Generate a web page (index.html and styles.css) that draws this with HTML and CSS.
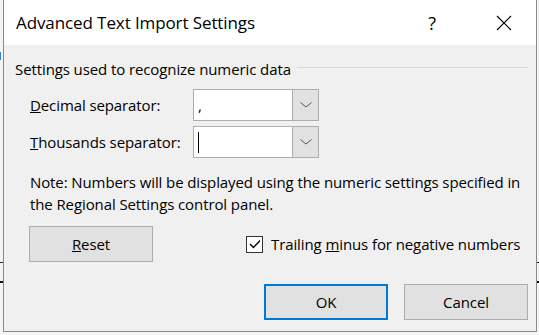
FILE: index.html
```html
<!DOCTYPE html>
<html lang="en">
<head>
  <meta charset="UTF-8">
  <title>Advanced Text Import Settings</title>
  <link rel="stylesheet" href="styles.css">
</head>
<body>
  <!-- bits of the window behind the dialog -->
  <span class="behind mark-blue"></span>
  <span class="behind mark-l1"></span>
  <span class="behind mark-l2"></span>
  <span class="behind mark-r1"></span>
  <span class="behind mark-r2"></span>

  <div class="dialog">
    <div class="titlebar">
      <span class="title">Advanced Text Import Settings</span>
      <span class="help">?</span>
      <svg class="close" width="16" height="16" viewBox="0 0 16 16">
        <path d="M1 1 L15 15 M15 1 L1 15" stroke="#000" stroke-width="1.1" fill="none"/>
      </svg>
    </div>

    <div class="content">
      <div class="group-head">
        <span>Settings used to recognize numeric data</span>
        <span class="rule"></span>
      </div>

      <div class="field">
        <label class="field-label"><u>D</u>ecimal separator:</label>
        <div class="combo">
          <span class="combo-text">,</span>
          <span class="combo-btn">
            <svg width="12" height="6" viewBox="0 0 12 6"><polyline points="0.5,0.5 6,5 11.5,0.5" fill="none" stroke="#555" stroke-width="1"/></svg>
          </span>
        </div>
      </div>
      <div class="field">
        <label class="field-label"><u>T</u>housands separator:</label>
        <div class="combo">
          <span class="combo-text"><span class="caret"></span></span>
          <span class="combo-btn">
            <svg width="12" height="6" viewBox="0 0 12 6"><polyline points="0.5,0.5 6,5 11.5,0.5" fill="none" stroke="#555" stroke-width="1"/></svg>
          </span>
        </div>
      </div>

      <p class="note">Note: Numbers will be displayed using the numeric settings specified in<br>the Regional Settings control panel.</p>

      <div class="reset-row">
        <button class="btn"><u>R</u>eset</button>
        <span class="check">
          <svg width="12" height="10" viewBox="0 0 12 10"><polyline points="1,5 4.5,8.5 11,1.5" fill="none" stroke="#000" stroke-width="1.3"/></svg>
        </span>
        <span class="check-label">Trailing <u>m</u>inus for negative numbers</span>
      </div>

      <div class="actions">
        <button class="btn btn-default">OK</button>
        <button class="btn">Cancel</button>
      </div>
    </div>
  </div>
</body>
</html>
```

FILE: styles.css
```css
body{
  margin: 0;
  padding: 0 2px 0 3px;
  background: #f4f4f4;
  font-family: "Open Sans", "Noto Sans", sans-serif;
  font-size: 15px;
  letter-spacing: -0.1px;
  color: #000;
  position: relative;
  height: 335px;
  overflow: hidden;
}
.behind{
  position: absolute;
  display: block;
}
.mark-blue{ left: 0; top: 52px; width: 1px; height: 8px; background: #3a7bd5; }
.mark-l1{ left: 0; top: 262px; width: 3px; height: 1px; background: #222; }
.mark-l2{ left: 0; top: 281px; width: 3px; height: 2px; background: #111; }
.mark-r1{ right: 0; top: 262px; width: 2px; height: 1px; background: #222; }
.mark-r2{ right: 0; top: 281px; width: 2px; height: 2px; background: #111; }

.dialog{
  width: 534px;
  height: 332px;
  box-sizing: border-box;
  border: 1px solid #8a8a8a;
  border-top: none;
  background: #f0f0f0;
  display: flex;
  flex-direction: column;
}
.titlebar{
  height: 45px;
  flex: none;
  background: #fff;
  display: flex;
  align-items: center;
  padding: 0 24px 0 12px;
}
.title{
  font-size: 17px;
  flex: 1;
}
.help{
  width: 16px;
  text-align: center;
  font-size: 18px;
  margin-right: 56px;
}
.close{
  display: block;
}

.content{
  padding: 14px 8px 0 11px;
}
.group-head{
  display: flex;
  height: 20px;
  line-height: 20px;
  white-space: nowrap;
}
.rule{
  flex: 1;
  height: 1px;
  background: #d8d8d8;
  margin: 8px 0 0 6px;
}

.field{
  display: flex;
  align-items: center;
  padding-left: 15px;
  margin-top: 5px;
}
.group-head + .field{
  margin-top: 10px;
}
.field-label{
  width: 163px;
}
.combo{
  width: 126px;
  height: 32px;
  box-sizing: border-box;
  border: 1px solid #adadad;
  display: flex;
  background: #fff;
}
.combo-text{
  flex: 1;
  padding-left: 4px;
  display: flex;
  align-items: center;
}
.caret{
  width: 1px;
  height: 21px;
  background: #000;
}
.combo-btn{
  width: 25px;
  background: #e1e1e1;
  border-left: 1px solid #adadad;
  display: flex;
  align-items: center;
  justify-content: center;
}

.note{
  margin: 13px 0 0 15px;
  line-height: 22px;
  white-space: nowrap;
}

.reset-row{
  display: flex;
  align-items: center;
  margin: 11px 0 0 14px;
}
.btn{
  width: 124px;
  height: 36px;
  box-sizing: border-box;
  border: 1px solid #adadad;
  background: #e1e1e1;
  font: inherit;
  letter-spacing: inherit;
  color: #000;
  padding: 0;
}
.check{
  width: 17px;
  height: 17px;
  box-sizing: border-box;
  border: 1px solid #333;
  background: #fff;
  margin-left: 93px;
  display: flex;
  align-items: center;
  justify-content: center;
}
.check-label{
  margin-left: 8px;
  white-space: nowrap;
}

.actions{
  display: flex;
  justify-content: flex-end;
  gap: 16px;
  margin-top: 22px;
}
.btn-default{
  border: 2px solid #0078d7;
}
```
